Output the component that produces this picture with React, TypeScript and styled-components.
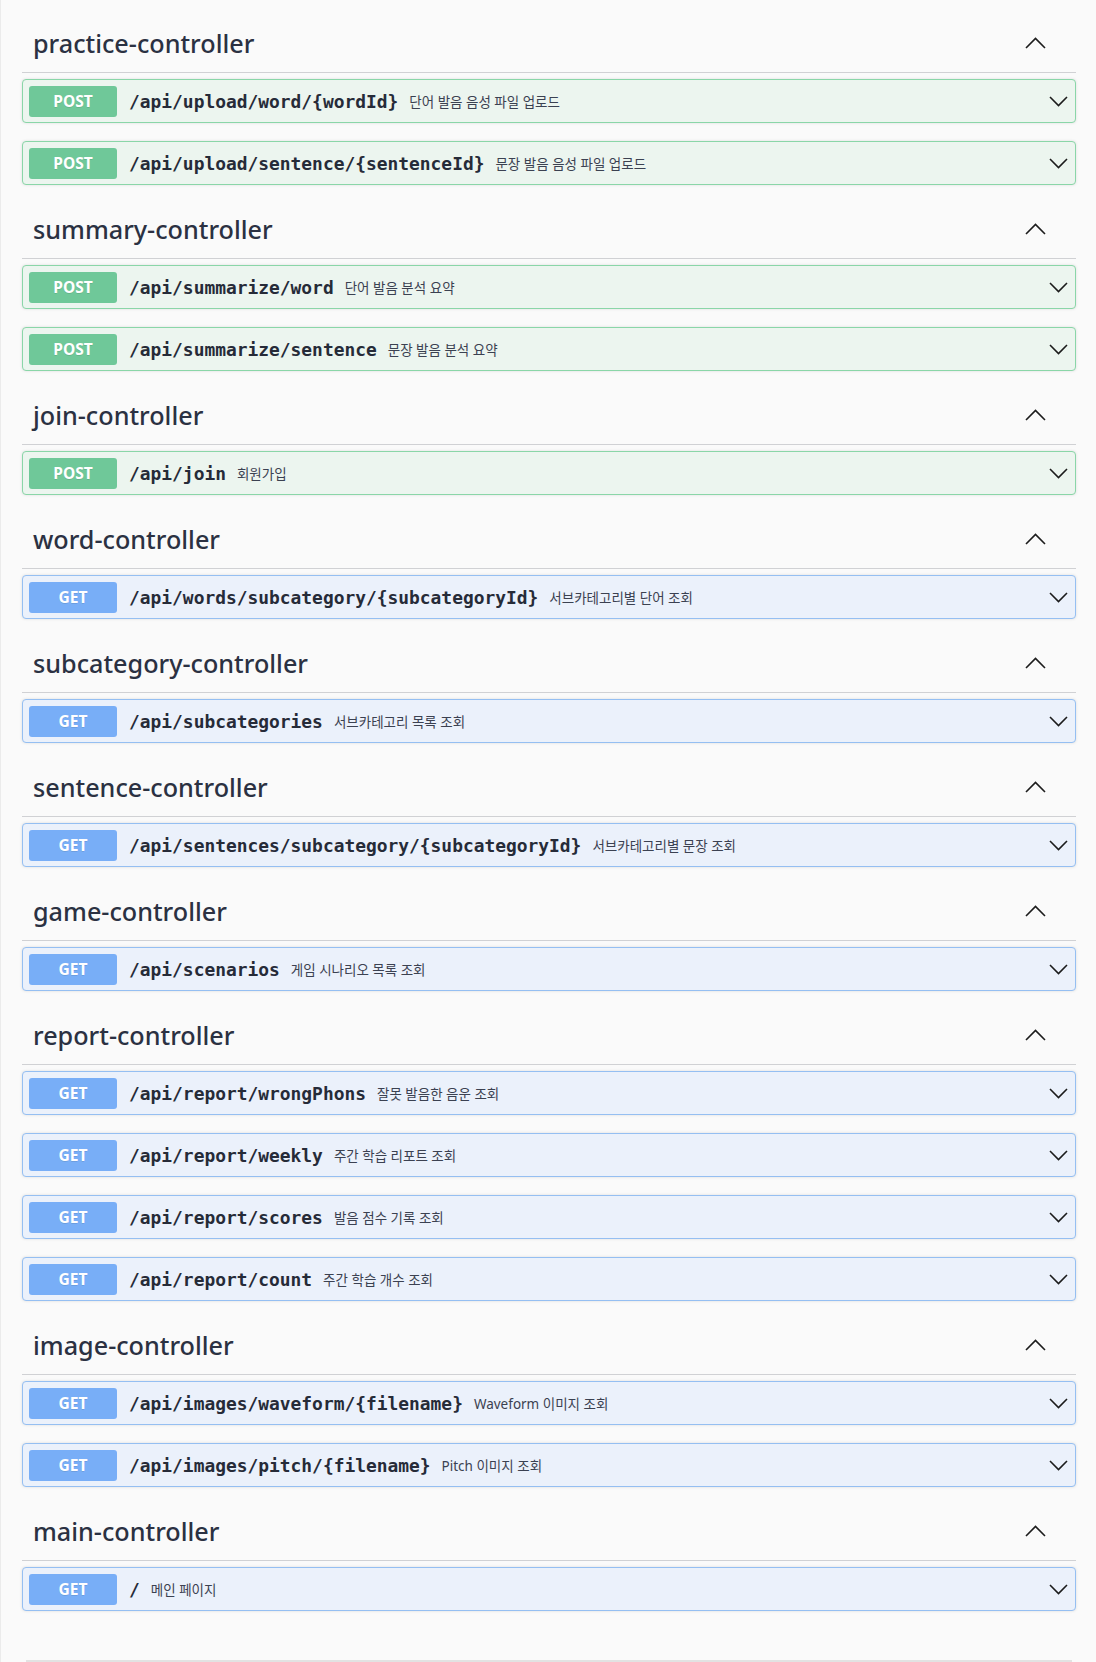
import React from "react";
import styled, { createGlobalStyle } from "styled-components";

const Global = createGlobalStyle`
  html, body { margin: 0; padding: 0; background: #fafafa; }
  * { box-sizing: border-box; }
`;

type Method = "GET" | "POST";
type Op = { method: Method; path: string; desc: string };
type Tag = { name: string; ops: Op[] };

const tags: Tag[] = [
  { name: "practice-controller", ops: [
    { method: "POST", path: "/api/upload/word/{wordId}", desc: "단어 발음 음성 파일 업로드" },
    { method: "POST", path: "/api/upload/sentence/{sentenceId}", desc: "문장 발음 음성 파일 업로드" },
  ]},
  { name: "summary-controller", ops: [
    { method: "POST", path: "/api/summarize/word", desc: "단어 발음 분석 요약" },
    { method: "POST", path: "/api/summarize/sentence", desc: "문장 발음 분석 요약" },
  ]},
  { name: "join-controller", ops: [
    { method: "POST", path: "/api/join", desc: "회원가입" },
  ]},
  { name: "word-controller", ops: [
    { method: "GET", path: "/api/words/subcategory/{subcategoryId}", desc: "서브카테고리별 단어 조회" },
  ]},
  { name: "subcategory-controller", ops: [
    { method: "GET", path: "/api/subcategories", desc: "서브카테고리 목록 조회" },
  ]},
  { name: "sentence-controller", ops: [
    { method: "GET", path: "/api/sentences/subcategory/{subcategoryId}", desc: "서브카테고리별 문장 조회" },
  ]},
  { name: "game-controller", ops: [
    { method: "GET", path: "/api/scenarios", desc: "게임 시나리오 목록 조회" },
  ]},
  { name: "report-controller", ops: [
    { method: "GET", path: "/api/report/wrongPhons", desc: "잘못 발음한 음운 조회" },
    { method: "GET", path: "/api/report/weekly", desc: "주간 학습 리포트 조회" },
    { method: "GET", path: "/api/report/scores", desc: "발음 점수 기록 조회" },
    { method: "GET", path: "/api/report/count", desc: "주간 학습 개수 조회" },
  ]},
  { name: "image-controller", ops: [
    { method: "GET", path: "/api/images/waveform/{filename}", desc: "Waveform 이미지 조회" },
    { method: "GET", path: "/api/images/pitch/{filename}", desc: "Pitch 이미지 조회" },
  ]},
  { name: "main-controller", ops: [
    { method: "GET", path: "/", desc: "메인 페이지" },
  ]},
];

const palette: Record<Method, { badge: string; border: string; bg: string }> = {
  POST: { badge: "#6fc899", border: "#8ad6a8", bg: "#ecf5ef" },
  GET: { badge: "#78aef7", border: "#95bff2", bg: "#ebf1fb" },
};

const Page = styled.div`
  min-height: 1662px;
  border-left: 1px solid #ebebeb;
  padding: 17px 20px 0 21px;
  font-family: "Noto Sans", "Noto Sans CJK KR", sans-serif;
  color: #3b4151;
`;

const Section = styled.section`
  display: flex;
  flex-direction: column;
`;

const TagHeader = styled.div`
  height: 56px;
  display: flex;
  align-items: center;
  justify-content: space-between;
  padding: 0 30px 3px 11px;
  border-bottom: 1px solid #d0d1d4;
  margin-bottom: 6px;
`;

const TagTitle = styled.h3`
  margin: 0;
  font-size: 25.2px;
  font-weight: 500;
  color: #2b3142;
  font-family: "Noto Sans", "Noto Sans CJK KR", sans-serif;
`;

const Row = styled.div<{ $m: Method }>`
  height: 44px;
  display: flex;
  align-items: center;
  padding: 0 7px 0 6px;
  margin-bottom: 18px;
  border: 1px solid ${(p) => palette[p.$m].border};
  background: ${(p) => palette[p.$m].bg};
  border-radius: 4px;
  box-shadow: 0 0 3px rgba(0, 0, 0, 0.12);
`;

const Badge = styled.span<{ $m: Method }>`
  width: 88px;
  height: 31px;
  flex-shrink: 0;
  display: flex;
  align-items: center;
  justify-content: center;
  border-radius: 3px;
  background: ${(p) => palette[p.$m].badge};
  color: #fff;
  font-family: "Noto Sans", sans-serif;
  font-weight: 700;
  font-size: 15.5px;
  text-shadow: 0 1px 0 rgba(0, 0, 0, 0.1);
`;

const Path = styled.span`
  margin-left: 12px;
  font-family: "DejaVu Sans Mono", "Liberation Mono", monospace;
  font-weight: 700;
  font-size: 17.9px;
  color: #262b38;
  white-space: nowrap;
`;

const Desc = styled.span`
  margin-left: 11px;
  font-family: "Noto Sans", "Noto Sans CJK KR", sans-serif;
  font-size: 13.5px;
  color: #3b4151;
  flex: 1;
  white-space: nowrap;
`;

const Chevron = styled.svg`
  flex-shrink: 0;
  display: block;
`;

const Footer = styled.div`
  margin: 31px 4px 0 4px;
  border-top: 2px solid #e2e2e2;
`;

const Up = () => (
  <Chevron width="21" height="12" viewBox="0 0 21 12">
    <polyline points="1,11 10.5,1.5 20,11" fill="none" stroke="#1c1c1c" strokeWidth="1.6" />
  </Chevron>
);

const Down = () => (
  <Chevron width="19" height="11" viewBox="0 0 19 11">
    <polyline points="1,1 9.5,9.5 18,1" fill="none" stroke="#1c1c1c" strokeWidth="1.6" />
  </Chevron>
);

export default function App() {
  return (
    <>
      <Global />
      <Page>
        {tags.map((t) => (
          <Section key={t.name}>
            <TagHeader>
              <TagTitle>{t.name}</TagTitle>
              <Up />
            </TagHeader>
            {t.ops.map((o) => (
              <Row key={o.path} $m={o.method}>
                <Badge $m={o.method}>{o.method}</Badge>
                <Path>{o.path}</Path>
                <Desc>{o.desc}</Desc>
                <Down />
              </Row>
            ))}
          </Section>
        ))}
        <Footer />
      </Page>
    </>
  );
}
